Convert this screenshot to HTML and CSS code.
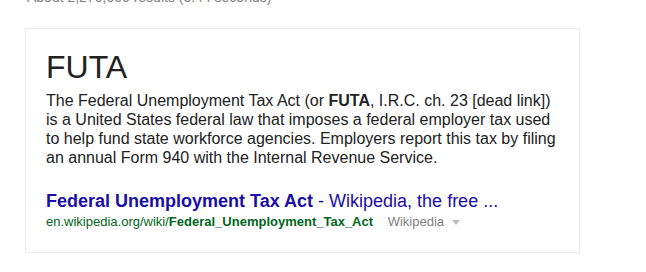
FILE: index.html
```html
<!DOCTYPE html>
<html lang="en">
<head>
    <meta charset="UTF-8">
    <title>FUTA - Search</title>
    <link rel="stylesheet" href="styles.css">
</head>
<body>
    <div class="stats">About 2,270,000 results (0.44 seconds)</div>

    <div class="card">
        <h1 class="title">FUTA</h1>
        <p class="desc">The Federal Unemployment Tax Act (or <b>FUTA</b>, I.R.C. ch. 23 [dead link]) is a United States federal law that imposes a federal employer tax used to help fund state workforce agencies. Employers report this tax by filing an annual Form 940 with the Internal Revenue Service.</p>

        <a class="link" href="#"><b>Federal Unemployment Tax Act</b> - Wikipedia, the free ...</a>
        <div class="url">
            en.wikipedia.org/wiki/<b>Federal_Unemployment_Tax_Act</b>
            <span class="source">Wikipedia <span class="caret"></span></span>
        </div>
    </div>
</body>
</html>
```

FILE: styles.css
```css
body { margin: 0; font-family: Arial, "Liberation Sans", sans-serif; background: #fff; color: #222; }
.stats { height: 20px; margin-top: -10px; padding-left: 27px; font-size: 14px; line-height: 14px; color: #808080; }
.card { box-sizing: border-box; width: 555px; height: 225px; margin: 18px 0 0 25px; padding: 20px 20px 0 20px; border: 1px solid #ebebeb; }
.title { margin: 0; font-size: 32px; font-weight: normal; line-height: 36px; color: #222; }
.desc { margin: 6px 0 0; font-size: 16px; line-height: 19px; color: #222; }
.link { display: block; margin-top: 24px; font-size: 18px; line-height: 21px; color: #1a0dab; text-decoration: none; }
.url { margin-top: 2px; font-size: 13px; line-height: 16px; color: #006621; }
.source { margin-left: 11px; color: #808080; }
.caret { display: inline-block; margin-left: 4px; vertical-align: middle; border-left: 4px solid transparent; border-right: 4px solid transparent; border-top: 5px solid #bbb; }
```
